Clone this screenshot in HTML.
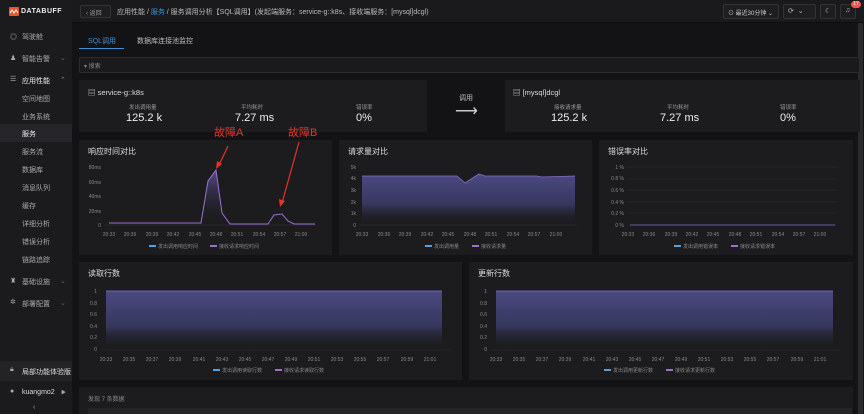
<!DOCTYPE html>
<html><head><meta charset="utf-8"><style>
*{margin:0;padding:0;box-sizing:border-box}
body{width:864px;height:414px;overflow:hidden;background:#131315;font-family:"Liberation Sans","Noto Sans CJK SC",sans-serif;color:#ddd;position:relative}
.a{position:absolute}
.sb{left:0;top:0;width:72px;height:414px;background:#1b1b1d}
.si{position:absolute;left:22px;font-size:7px;color:#aaa;white-space:nowrap}
.sh{left:10px}
.top{left:72px;top:0;width:792px;height:23px;background:#1a1a1c;border-bottom:1px solid #0e0e0f}
.panel{position:absolute;background:#1c1c1e}
.t{position:absolute;font-size:8px;color:#ddd;white-space:nowrap}
.lbl{position:absolute;font-size:5.5px;color:#999;white-space:nowrap}
.val{position:absolute;font-size:11px;color:#eee;white-space:nowrap}
.btn{position:absolute;border:1px solid #333;background:#1e1e20;border-radius:2px}
</style></head><body>
<div class="a sb"></div>
<div class="a" style="left:9px;top:7px;width:10px;height:9px;background:#e8572a;border-radius:1px"></div>
<svg class="a" style="left:9px;top:7px" width="10" height="9"><path d="M1 6 L3 3 L5 6 L7 3 L9 6" stroke="#fff" stroke-width="1" fill="none"/></svg>
<div class="a" style="left:21px;top:8px;font-size:7px;font-weight:bold;color:#eee;letter-spacing:.5px">DATABUFF</div>
<div class="si" style="top:32px">驾驶舱</div><div class="si sh" style="top:32px">◎</div>
<div class="si" style="top:54px">智能告警</div><div class="si sh" style="top:54px">♟</div><div class="si" style="left:60px;top:54px;color:#666">⌄</div>
<div class="si" style="top:76px;color:#eee">应用性能</div><div class="si sh" style="top:75px">☰</div><div class="si" style="left:60px;top:76px;color:#888">⌃</div>
<div class="si" style="top:94px">空间地图</div>
<div class="si" style="top:112px">业务系统</div>
<div class="a" style="left:0;top:124px;width:72px;height:18px;background:#26262a"></div>
<div class="si" style="top:129px;color:#eee">服务</div>
<div class="si" style="top:147px">服务流</div>
<div class="si" style="top:165px">数据库</div>
<div class="si" style="top:183px">消息队列</div>
<div class="si" style="top:201px">缓存</div>
<div class="si" style="top:219px">详细分析</div>
<div class="si" style="top:237px">错误分析</div>
<div class="si" style="top:255px">链路追踪</div>
<div class="si" style="top:277px">基础设施</div><div class="si sh" style="top:277px">♜</div><div class="si" style="left:60px;top:277px;color:#666">⌄</div>
<div class="si" style="top:299px">部署配置</div><div class="si sh" style="top:298px">✲</div><div class="si" style="left:60px;top:299px;color:#666">⌄</div>
<div class="a" style="left:0;top:361px;width:72px;height:20px;background:#232326"></div>
<div class="si" style="top:367px;color:#ddd">局部功能体验版</div><div class="si sh" style="top:366px">🔒︎</div>
<div class="si" style="top:389px;color:#ddd">kuangmo2</div><div class="si sh" style="top:388px">●</div><div class="si" style="left:61px;top:389px;font-size:5px">▶</div>
<div class="si" style="left:33px;top:404px">‹</div>

<div class="a top"></div>
<div class="btn" style="left:80px;top:5px;width:31px;height:13px"></div>
<div class="t" style="left:86px;top:8px;font-size:6px;color:#999">‹ 返回</div>
<div class="t" style="left:117px;top:7px;font-size:7px;color:#bbb">应用性能 / <span style="color:#3a8fd8">服务</span> / 服务调用分析【SQL调用】(发起端服务：service-g::k8s、接收端服务：[mysql]dcgl)</div>
<div class="btn" style="left:723px;top:4px;width:56px;height:15px"></div>
<div class="t" style="left:728px;top:8px;font-size:6px;color:#ccc">⊙ 最近30分钟 ⌄</div>
<div class="btn" style="left:783px;top:4px;width:33px;height:15px"></div>
<div class="t" style="left:788px;top:7px;font-size:7px;color:#bbb">⟳ &nbsp;⌄</div>
<div class="btn" style="left:820px;top:4px;width:16px;height:15px"></div>
<div class="t" style="left:825px;top:7px;font-size:7px;color:#bbb">☾</div>
<div class="btn" style="left:840px;top:4px;width:16px;height:15px"></div>
<div class="t" style="left:845px;top:7px;font-size:7px;color:#bbb">♫</div>
<div class="a" style="left:851px;top:1px;width:10px;height:7px;background:#e55;border-radius:4px;font-size:5px;color:#fff;text-align:center;line-height:7px">17</div>

<div class="a" style="left:858px;top:23px;width:5px;height:391px;background:#2a2a2c"></div>

<div class="t" style="left:88px;top:36px;font-size:7px;color:#3a8fd8">SQL调用</div>
<div class="a" style="left:79px;top:48px;width:45px;height:1px;background:#3a8fd8"></div>
<div class="t" style="left:137px;top:36px;font-size:7px;color:#bbb">数据库连接池监控</div>
<div class="a" style="left:79px;top:57px;width:781px;height:16px;border:1px solid #2c2c2e;background:#1a1a1c;border-radius:2px"></div>
<div class="t" style="left:84px;top:61px;font-size:6px;color:#888">▾ 搜索</div>

<div class="panel" style="left:79px;top:80px;width:348px;height:52px"></div>
<div class="t" style="left:88px;top:87px;font-size:7.5px">▤ service-g::k8s</div>
<div class="lbl" style="left:129px;top:103px">发出调用量</div><div class="val" style="left:126px;top:112px">125.2 k</div>
<div class="lbl" style="left:241px;top:103px">平均耗时</div><div class="val" style="left:235px;top:112px">7.27 ms</div>
<div class="lbl" style="left:356px;top:103px">错误率</div><div class="val" style="left:356px;top:112px">0%</div>
<div class="t" style="left:459px;top:93px;font-size:7px;color:#bbb">调用</div>
<div class="t" style="left:455px;top:101px;font-size:16px;color:#ccc">⟶</div>
<div class="panel" style="left:505px;top:80px;width:355px;height:52px"></div>
<div class="t" style="left:513px;top:87px;font-size:7.5px">▤ [mysql]dcgl</div>
<div class="lbl" style="left:554px;top:103px">接收请求量</div><div class="val" style="left:551px;top:112px">125.2 k</div>
<div class="lbl" style="left:667px;top:103px">平均耗时</div><div class="val" style="left:660px;top:112px">7.27 ms</div>
<div class="lbl" style="left:780px;top:103px">错误率</div><div class="val" style="left:780px;top:112px">0%</div>

<div class="panel" style="left:79px;top:140px;width:253px;height:115px"></div>
<div class="panel" style="left:339px;top:140px;width:253px;height:115px"></div>
<div class="panel" style="left:599px;top:140px;width:254px;height:115px"></div>
<div class="panel" style="left:79px;top:262px;width:383px;height:118px"></div>
<div class="panel" style="left:469px;top:262px;width:384px;height:118px"></div>
<div class="panel" style="left:79px;top:387px;width:774px;height:27px"></div>
<div class="a" style="left:88px;top:408px;width:764px;height:6px;background:#252527"></div>
<div class="t" style="left:88px;top:394px;font-size:6px;color:#888">发现 7 条数据</div>

<div class="t" style="left:88px;top:146px">响应时间对比</div>
<div class="t" style="left:348px;top:146px">请求量对比</div>
<div class="t" style="left:608px;top:146px">错误率对比</div>
<div class="t" style="left:88px;top:268px">读取行数</div>
<div class="t" style="left:478px;top:268px">更新行数</div>
<div class="t" style="left:214px;top:124px;font-size:11px;color:#e8322a">故障A</div>
<div class="t" style="left:288px;top:124px;font-size:11px;color:#e8322a">故障B</div>

<svg class="a" style="left:0;top:0" width="864" height="414" font-family="Liberation Sans" font-size="5" fill="#888">
<defs><linearGradient id="g" x1="0" y1="0" x2="0" y2="1"><stop offset="0" stop-color="#4a4a82"/><stop offset=".6" stop-color="#36365e"/><stop offset="1" stop-color="#1c1c1e" stop-opacity="0"/></linearGradient>
<linearGradient id="g2" x1="0" y1="0" x2="0" y2="1"><stop offset="0" stop-color="#5a4a90"/><stop offset="1" stop-color="#1c1c1e" stop-opacity="0"/></linearGradient></defs>
<!-- chart1 -->
<g text-anchor="end"><text x="101" y="169">80ms</text><text x="101" y="184">60ms</text><text x="101" y="198">40ms</text><text x="101" y="213">20ms</text><text x="101" y="227">0</text></g>
<path d="M105 225H316" stroke="#333" stroke-width=".5"/>
<path d="M109 223H201L208 181L216 170L222 213L230 224H268L274 215L282 214L288 221L294 224H315V225H109Z" fill="url(#g2)"/>
<path d="M109 223H201L208 181L216 170L222 213L230 224H268L274 215L282 214L288 221L294 224H315" stroke="#9b6fd0" stroke-width="1" fill="none"/>
<g text-anchor="middle"><text x="109" y="236">20:33</text><text x="130" y="236">20:36</text><text x="152" y="236">20:39</text><text x="173" y="236">20:42</text><text x="195" y="236">20:45</text><text x="216" y="236">20:48</text><text x="237" y="236">20:51</text><text x="259" y="236">20:54</text><text x="280" y="236">20:57</text><text x="301" y="236">21:00</text></g>
<rect x="149" y="245" width="7" height="2" fill="#4ea3e8"/><text x="158" y="248">发出调用响应时间</text>
<rect x="210" y="245" width="7" height="2" fill="#a070d0"/><text x="219" y="248">接收请求响应时间</text>
<path d="M228 146L219 165" stroke="#e8322a" stroke-width="1.2"/><path d="M216 169L217 161L222 164Z" fill="#e8322a"/>
<path d="M299 142L282 203" stroke="#e8322a" stroke-width="1.2"/><path d="M280 207L279 199L285 201Z" fill="#e8322a"/>
<!-- chart2 -->
<g text-anchor="end"><text x="356" y="169">5k</text><text x="356" y="180">4k</text><text x="356" y="192">3k</text><text x="356" y="204">2k</text><text x="356" y="215">1k</text><text x="356" y="227">0</text></g>
<path d="M359 225H577" stroke="#333" stroke-width=".5"/>
<path d="M362 176H457L465 183L479 174L485 176H537L542 177L575 176V225H362Z" fill="url(#g)"/>
<path d="M362 176H457L465 183L479 174L485 176H537L542 177L575 176" stroke="#8a6fc8" stroke-width=".8" fill="none"/>
<g text-anchor="middle"><text x="362" y="236">20:33</text><text x="384" y="236">20:36</text><text x="405" y="236">20:39</text><text x="427" y="236">20:42</text><text x="448" y="236">20:45</text><text x="470" y="236">20:48</text><text x="491" y="236">20:51</text><text x="513" y="236">20:54</text><text x="534" y="236">20:57</text><text x="556" y="236">21:00</text></g>
<rect x="425" y="245" width="7" height="2" fill="#4ea3e8"/><text x="434" y="248">发出调用量</text>
<rect x="472" y="245" width="7" height="2" fill="#a070d0"/><text x="481" y="248">接收请求量</text>
<!-- chart3 -->
<g text-anchor="end"><text x="624" y="169">1 %</text><text x="624" y="180">0.8 %</text><text x="624" y="192">0.6 %</text><text x="624" y="204">0.4 %</text><text x="624" y="215">0.2 %</text><text x="624" y="227">0 %</text></g>
<g stroke="#2a2a2c" stroke-width=".5"><path d="M626 167H838M626 179H838M626 190H838M626 202H838M626 213H838"/></g>
<path d="M630 225H835" stroke="#8a6fc8" stroke-width=".8"/>
<g text-anchor="middle"><text x="628" y="236">20:33</text><text x="649" y="236">20:36</text><text x="671" y="236">20:39</text><text x="692" y="236">20:42</text><text x="713" y="236">20:45</text><text x="735" y="236">20:48</text><text x="756" y="236">20:51</text><text x="778" y="236">20:54</text><text x="799" y="236">20:57</text><text x="820" y="236">21:00</text></g>
<rect x="674" y="245" width="7" height="2" fill="#4ea3e8"/><text x="683" y="248">发出调用错误率</text>
<rect x="731" y="245" width="7" height="2" fill="#a070d0"/><text x="740" y="248">接收请求错误率</text>
<!-- chart4 -->
<g text-anchor="end"><text x="97" y="293">1</text><text x="97" y="305">0.8</text><text x="97" y="316">0.6</text><text x="97" y="328">0.4</text><text x="97" y="339">0.2</text><text x="97" y="351">0</text></g>
<path d="M100 350H450" stroke="#2c2c2e" stroke-width=".5"/>
<rect x="106" y="291" width="336" height="59" fill="url(#g)"/>
<path d="M106 291H442" stroke="#8a6fc8" stroke-width=".7"/>
<g text-anchor="middle"><text x="106" y="361">20:33</text><text x="129" y="361">20:35</text><text x="152" y="361">20:37</text><text x="175" y="361">20:39</text><text x="199" y="361">20:41</text><text x="222" y="361">20:43</text><text x="245" y="361">20:45</text><text x="268" y="361">20:47</text><text x="291" y="361">20:49</text><text x="314" y="361">20:51</text><text x="337" y="361">20:53</text><text x="360" y="361">20:55</text><text x="383" y="361">20:57</text><text x="407" y="361">20:59</text><text x="430" y="361">21:01</text></g>
<rect x="213" y="369" width="7" height="2" fill="#4ea3e8"/><text x="222" y="372">发出调用读取行数</text>
<rect x="275" y="369" width="7" height="2" fill="#a070d0"/><text x="284" y="372">接收请求读取行数</text>
<!-- chart5 -->
<g text-anchor="end"><text x="487" y="293">1</text><text x="487" y="305">0.8</text><text x="487" y="316">0.6</text><text x="487" y="328">0.4</text><text x="487" y="339">0.2</text><text x="487" y="351">0</text></g>
<path d="M490 350H840" stroke="#2c2c2e" stroke-width=".5"/>
<rect x="496" y="291" width="337" height="59" fill="url(#g)"/>
<path d="M496 291H833" stroke="#8a6fc8" stroke-width=".7"/>
<g text-anchor="middle"><text x="496" y="361">20:33</text><text x="519" y="361">20:35</text><text x="542" y="361">20:37</text><text x="565" y="361">20:39</text><text x="589" y="361">20:41</text><text x="612" y="361">20:43</text><text x="635" y="361">20:45</text><text x="658" y="361">20:47</text><text x="681" y="361">20:49</text><text x="704" y="361">20:51</text><text x="727" y="361">20:53</text><text x="750" y="361">20:55</text><text x="773" y="361">20:57</text><text x="797" y="361">20:59</text><text x="820" y="361">21:01</text></g>
<rect x="604" y="369" width="7" height="2" fill="#4ea3e8"/><text x="613" y="372">发出调用更新行数</text>
<rect x="666" y="369" width="7" height="2" fill="#a070d0"/><text x="675" y="372">接收请求更新行数</text>
</svg>
</body></html>
